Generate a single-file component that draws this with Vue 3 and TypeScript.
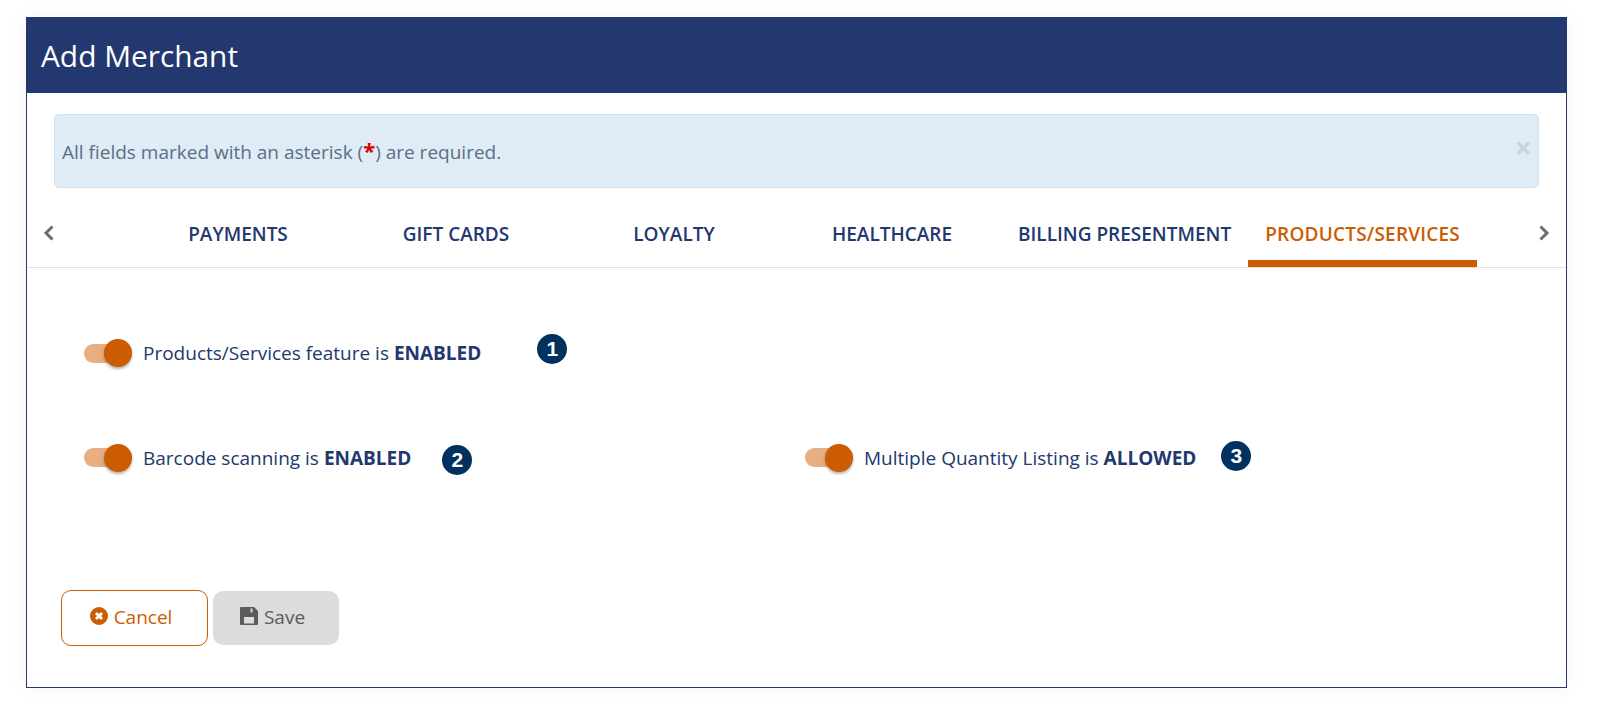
<script setup lang="ts">
const tabs: string[] = ['PAYMENTS', 'GIFT CARDS', 'LOYALTY', 'HEALTHCARE', 'BILLING PRESENTMENT', 'PRODUCTS/SERVICES']
</script>

<template>
  <div class="page">
    <main class="card">
      <header class="head">Add Merchant</header>
      <div class="alert">
        <span>All fields marked with an asterisk (<b class="star">*</b>) are required.</span>
        <span class="close">×</span>
      </div>
      <nav class="tabs">
        <svg class="chev" viewBox="0 0 12 18" width="12" height="18"><path d="M9.5 2.5 3 9l6.5 6.5" /></svg>
        <div class="tablist">
          <a v-for="(t, i) in tabs" :key="t" class="tab" :class="{ active: i === tabs.length - 1 }">{{ t }}</a>
        </div>
        <svg class="chev" viewBox="0 0 12 18" width="12" height="18"><path d="M2.5 2.5 9 9l-6.5 6.5" /></svg>
      </nav>
      <section class="body">
        <div class="row first">
          <div class="opt">
            <span class="toggle"><i></i></span>
            <span class="label">Products/Services feature is <b>ENABLED</b></span>
            <span class="badge b1">1</span>
          </div>
        </div>
        <div class="row second">
          <div class="opt half">
            <span class="toggle"><i></i></span>
            <span class="label">Barcode scanning is <b>ENABLED</b></span>
            <span class="badge b2">2</span>
          </div>
          <div class="opt">
            <span class="toggle"><i></i></span>
            <span class="label">Multiple Quantity Listing is <b>ALLOWED</b></span>
            <span class="badge b3">3</span>
          </div>
        </div>
        <div class="actions">
          <button class="btn cancel">
            <svg viewBox="0 0 18 18" width="18" height="18"><path fill-rule="evenodd" d="M9 0a9 9 0 1 1 0 18A9 9 0 0 1 9 0ZM7 5 5 7l2 2-2 2 2 2 2-2 2 2 2-2-2-2 2-2-2-2-2 2Z" /></svg>
            Cancel
          </button>
          <button class="btn save">
            <svg viewBox="0 0 18 18" width="18" height="18"><path fill-rule="evenodd" d="M1 0h13l4 4v13a1 1 0 0 1-1 1H1a1 1 0 0 1-1-1V1a1 1 0 0 1 1-1Zm9.500 1.500v4h2v-4ZM4 10v6.500h10V10Z" /></svg>
            Save
          </button>
        </div>
      </section>
    </main>
  </div>
</template>

<style>
html, body { margin: 0; background: #fff; }
</style>

<style scoped>
.page {
  padding: 17px 32px 24px 26px;
  font-family: "Open Sans", sans-serif;
}
.card {
  height: 671px;
  box-sizing: border-box;
  border: 1px solid #22386f;
  border-top: 0;
  background: #fff;
  box-shadow: 0 0 20px rgba(0, 0, 0, .05);
}
.head {
  height: 76px;
  margin: 0 -1px;
  padding-left: 15px;
  background: #22386f;
  color: #fff;
  font-size: 29.85px;
  line-height: 78px;
}
.alert {
  height: 74px;
  margin: 21px 27px 0;
  padding: 2px 6px 0 7px;
  box-sizing: border-box;
  display: flex;
  align-items: center;
  justify-content: space-between;
  background: #dfebf5;
  border: 1px solid #cfe3f0;
  border-radius: 5px;
  color: #5a6f86;
  font-size: 19px;
}
.star { color: #d00; font-size: 22px; line-height: 1; }
.close { color: #c6d2df; font-size: 30px; font-weight: 700; line-height: 1; margin-top: -8px; }
.tabs {
  height: 79px;
  display: flex;
  align-items: center;
  justify-content: space-between;
  padding: 0 16px;
  border-bottom: 1px solid #e2e2e2;
}
.chev { fill: none; stroke: #6d6d6d; stroke-width: 3; margin-top: 10px; }
.tablist { display: flex; height: 100%; align-items: stretch; flex: 1; margin-left: 74px; }
.tab {
  min-width: 218px;
  padding: 20px 17px 0;
  box-sizing: border-box;
  display: flex;
  align-items: center;
  justify-content: center;
  color: #22386f;
  font-size: 19px;
  font-weight: 600;
  border-bottom: 7px solid transparent;
}
.tab.active { color: #cc5c02; border-bottom-color: #cc5c02; letter-spacing: .2px; }
.body { padding: 0 57px; }
.row { display: flex; align-items: center; }
.first { margin-top: 72px; }
.second { margin-top: 74px; }
.opt { display: flex; align-items: center; }
.half { width: 721px; }
.toggle {
  position: relative;
  width: 48px;
  height: 19px;
  flex: none;
  margin-right: 11px;
  background: #e7ae82;
  border-radius: 10px;
}
.toggle i {
  position: absolute;
  right: 0;
  top: -4.5px;
  width: 28px;
  height: 28px;
  border-radius: 50%;
  background: #cc5c02;
  box-shadow: 0 2px 3px rgba(0, 0, 0, .3);
}
.label { color: #22386f; font-size: 19px; }
.label b { font-weight: 700; }
.badge {
  width: 30px;
  height: 30px;
  border-radius: 50%;
  background: #03315f;
  color: #fff;
  font-family: "Liberation Sans", sans-serif;
  font-size: 21px;
  font-weight: 700;
  display: flex;
  align-items: center;
  justify-content: center;
}
.b1 { margin-left: 56px; margin-top: -8px; }
.b2 { margin-left: 31px; margin-top: 5px; }
.b3 { margin-left: 25px; margin-top: -3px; }
.actions { display: flex; align-items: center; gap: 5px; margin: 115px 0 0 -23px; }
.btn {
  font-family: inherit;
  font-size: 19px;
  border-radius: 10px;
  display: flex;
  align-items: center;
  justify-content: center;
  gap: 6px;
  padding: 0 7px 2px 0;
}
.btn svg { fill: currentColor; margin-bottom: 2px; }
.cancel { width: 147px; height: 56px; background: #fff; border: 1px solid #cc5c02; color: #cc5c02; }
.save { width: 126px; height: 54px; background: #dcdcdc; border: 0; color: #5b5b5b; }
</style>
